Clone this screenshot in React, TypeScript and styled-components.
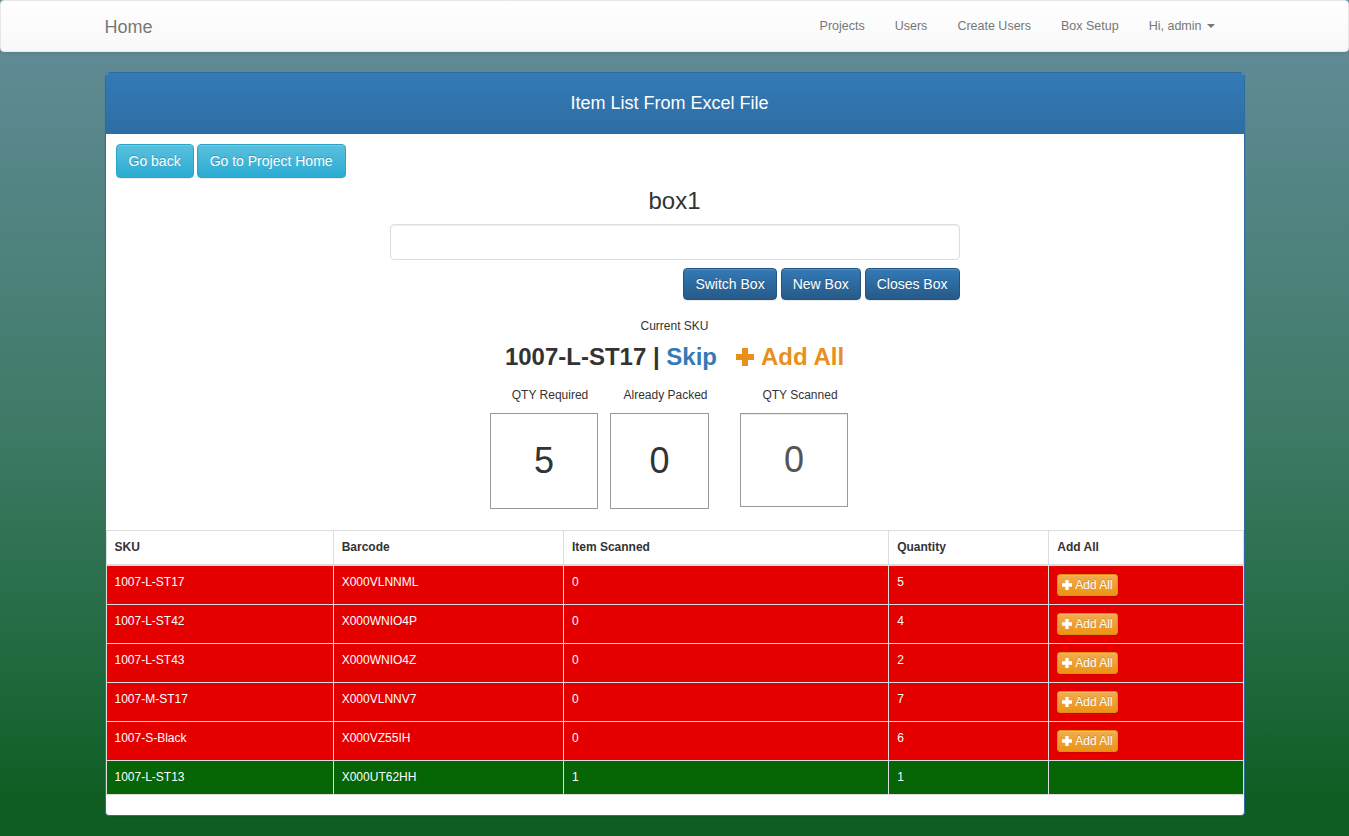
import React from "react";
import styled, { createGlobalStyle } from "styled-components";

const GlobalStyle = createGlobalStyle`
  html, body { margin: 0; padding: 0; }
  body {
    font-family: "Liberation Sans", Arial, sans-serif;
    font-size: 14px;
    line-height: 1.42857;
    color: #333;
    min-height: 836px;
    background: linear-gradient(to bottom, #6a909d 0px, #5f8a94 60px, #3e7a66 430px, #1c6638 700px, #0e5e22 800px, #0e5e22 836px);
  }
  * { box-sizing: border-box; }
`;

const Navbar = styled.nav`
  height: 52px;
  background: linear-gradient(to bottom, #ffffff 0%, #f8f8f8 100%);
  border: 1px solid #e7e7e7;
  border-radius: 4px;
  box-shadow: inset 0 1px 0 rgba(255,255,255,.15), 0 1px 5px rgba(0,0,0,.075);
  margin-bottom: 20px;
`;

const NavInner = styled.div`
  width: 1170px;
  margin: 0 auto;
  padding: 0 15px;
  height: 50px;
  display: flex;
  align-items: center;
  justify-content: space-between;
`;

const Brand = styled.a`
  font-size: 18px;
  line-height: 20px;
  color: #777;
  text-decoration: none;
  padding-top: 2px;
`;

const NavLinks = styled.ul`
  display: flex;
  list-style: none;
  margin: 0 15px 0 0;
  padding: 0;
`;

const NavLink = styled.li`
  padding: 15px 15px;
  font-size: 12.5px;
  line-height: 20px;
  color: #777;
  display: flex;
  align-items: center;
`;

const Caret = styled.span`
  display: inline-block;
  width: 0;
  height: 0;
  margin-left: 5px;
  border-top: 4px solid #777;
  border-left: 4px solid transparent;
  border-right: 4px solid transparent;
`;

const Panel = styled.section`
  width: 1140px;
  margin: 0 auto;
  background: #fff;
  border: 1px solid #2e6da4;
  border-radius: 4px;
  overflow: hidden;
  box-shadow: 0 1px 2px rgba(0,0,0,.05);
`;

const PanelHeading = styled.header`
  height: 61px;
  display: flex;
  align-items: center;
  justify-content: center;
  background: linear-gradient(to bottom, #337ab7 0%, #2e6da4 100%);
  color: #fff;
  font-size: 18px;
  padding: 1px 10px 0 0;
`;

const PanelBody = styled.div`
  padding: 10px 10px 21px;
  display: flex;
  flex-direction: column;
  align-items: center;
`;

const TopButtons = styled.div`
  align-self: flex-start;
  display: flex;
  gap: 3px;
`;

const Btn = styled.button<{ $variant: "info" | "primary" | "warning"; $small?: boolean }>`
  font-family: "Liberation Sans", Arial, sans-serif;
  color: #fff;
  border-radius: ${(p) => (p.$small ? "3px" : "4px")};
  font-size: ${(p) => (p.$small ? "12px" : "14px")};
  line-height: ${(p) => (p.$small ? "18px" : "20px")};
  padding: ${(p) => (p.$small ? "1px 5px" : "6px 12px")};
  height: ${(p) => (p.$small ? "22px" : "auto")};
  cursor: pointer;
  display: inline-flex;
  align-items: center;
  gap: 3px;
  text-shadow: 0 -1px 0 rgba(0,0,0,.2);
  box-shadow: inset 0 1px 0 rgba(255,255,255,.15), 0 1px 1px rgba(0,0,0,.075);
  ${(p) =>
    p.$variant === "info"
      ? `background: linear-gradient(to bottom, #5bc0de 0%, #2aabd2 100%); border: 1px solid #28a4c9;`
      : p.$variant === "primary"
      ? `background: linear-gradient(to bottom, #337ab7 0%, #265a88 100%); border: 1px solid #245580; height: 32px; padding: 5px 11px;`
      : `background: linear-gradient(to bottom, #f0ad4e 0%, #eb9316 100%); border: 1px solid #e38d13; padding: 1px 4px;`}
`;

const BoxTitle = styled.h3`
  font-size: 24px;
  font-weight: 500;
  line-height: 26px;
  margin: 10px 0 10px;
`;

const BoxInput = styled.input`
  width: 570px;
  height: 36px;
  border: 1px solid #ddd;
  border-radius: 4px;
  box-shadow: inset 0 1px 1px rgba(0,0,0,.075);
  outline: none;
`;

const BoxActions = styled.div`
  width: 570px;
  display: flex;
  justify-content: flex-end;
  gap: 4px;
  margin-top: 8px;
`;

const SmallLabel = styled.div`
  font-size: 12px;
  line-height: 17px;
`;

const CurrentLabel = styled(SmallLabel)`
  margin-top: 18px;
`;

const SkuLine = styled.div`
  font-size: 24px;
  font-weight: bold;
  line-height: 28px;
  margin-top: 8px;
  display: flex;
  align-items: center;
  white-space: pre;
`;

const SkipLink = styled.a`
  color: #337ab7;
  text-decoration: none;
`;

const AddAllLink = styled.a`
  color: #e8901b;
  text-decoration: none;
  margin-left: 19px;
  display: inline-flex;
  align-items: center;
  gap: 7px;
`;

const QtyRow = styled.div`
  display: flex;
  margin-top: 16px;
  padding-right: 11px;
  align-items: flex-start;
`;

const QtyGroup = styled.div<{ $gapRight: number }>`
  display: flex;
  flex-direction: column;
  align-items: center;
  margin-right: ${(p) => p.$gapRight}px;
`;

const QtyLabel = styled(SmallLabel)`
  padding-left: 12px;
  white-space: nowrap;
  margin-bottom: 9px;
`;

const QtyBox = styled.div<{ $w: number; $h: number; $muted?: boolean }>`
  width: ${(p) => p.$w}px;
  height: ${(p) => p.$h}px;
  border: 1px solid #999;
  display: flex;
  align-items: center;
  justify-content: center;
  font-size: 36px;
  color: ${(p) => (p.$muted ? "#555" : "#333")};
  ${(p) => (p.$muted ? "box-shadow: inset 0 1px 1px rgba(0,0,0,.075);" : "")}
`;

const Table = styled.table`
  width: 100%;
  border-collapse: collapse;
  margin-bottom: 20px;
  font-size: 12px;
  line-height: 17px;
`;

const Th = styled.th<{ $w: number }>`
  width: ${(p) => p.$w}px;
  text-align: left;
  padding: 8px;
  font-weight: bold;
  color: #333;
  border: 1px solid #ddd;
  border-bottom-width: 2px;
`;

const Tr = styled.tr<{ $done: boolean }>`
  background: ${(p) => (p.$done ? "#066506" : "#e50000")};
  color: #fff;
`;

const Td = styled.td`
  padding: 8px;
  vertical-align: top;
  border: 1px solid #ddd;
`;

const PlusIcon = ({ size, color }: { size: number; color: string }) => (
  <svg width={size} height={size} viewBox="0 0 12 12" aria-hidden="true">
    <path d="M4 0h4v4h4v4H8v4H4V8H0V4h4z" fill={color} />
  </svg>
);

const rows = [
  { sku: "1007-L-ST17", barcode: "X000VLNNML", scanned: 0, qty: 5 },
  { sku: "1007-L-ST42", barcode: "X000WNIO4P", scanned: 0, qty: 4 },
  { sku: "1007-L-ST43", barcode: "X000WNIO4Z", scanned: 0, qty: 2 },
  { sku: "1007-M-ST17", barcode: "X000VLNNV7", scanned: 0, qty: 7 },
  { sku: "1007-S-Black", barcode: "X000VZ55IH", scanned: 0, qty: 6 },
  { sku: "1007-L-ST13", barcode: "X000UT62HH", scanned: 1, qty: 1 },
];

export default function App() {
  return (
    <>
      <GlobalStyle />
      <Navbar>
        <NavInner>
          <Brand>Home</Brand>
          <NavLinks>
            <NavLink>Projects</NavLink>
            <NavLink>Users</NavLink>
            <NavLink>Create Users</NavLink>
            <NavLink>Box Setup</NavLink>
            <NavLink>
              Hi, admin <Caret />
            </NavLink>
          </NavLinks>
        </NavInner>
      </Navbar>
      <Panel>
        <PanelHeading>Item List From Excel File</PanelHeading>
        <PanelBody>
          <TopButtons>
            <Btn $variant="info">Go back</Btn>
            <Btn $variant="info">Go to Project Home</Btn>
          </TopButtons>
          <BoxTitle>box1</BoxTitle>
          <BoxInput type="text" />
          <BoxActions>
            <Btn $variant="primary">Switch Box</Btn>
            <Btn $variant="primary">New Box</Btn>
            <Btn $variant="primary">Closes Box</Btn>
          </BoxActions>
          <CurrentLabel>Current SKU</CurrentLabel>
          <SkuLine>
            1007-L-ST17 | <SkipLink>Skip</SkipLink>
            <AddAllLink>
              <PlusIcon size={18} color="#e8901b" />
              Add All
            </AddAllLink>
          </SkuLine>
          <QtyRow>
            <QtyGroup $gapRight={12}>
              <QtyLabel>QTY Required</QtyLabel>
              <QtyBox $w={108} $h={96}>5</QtyBox>
            </QtyGroup>
            <QtyGroup $gapRight={31}>
              <QtyLabel>Already Packed</QtyLabel>
              <QtyBox $w={99} $h={96}>0</QtyBox>
            </QtyGroup>
            <QtyGroup $gapRight={0}>
              <QtyLabel>QTY Scanned</QtyLabel>
              <QtyBox $w={108} $h={94} $muted>0</QtyBox>
            </QtyGroup>
          </QtyRow>
        </PanelBody>
        <Table>
          <thead>
            <tr>
              <Th $w={227}>SKU</Th>
              <Th $w={230}>Barcode</Th>
              <Th $w={325}>Item Scanned</Th>
              <Th $w={160}>Quantity</Th>
              <Th $w={194}>Add All</Th>
            </tr>
          </thead>
          <tbody>
            {rows.map((r) => {
              const done = r.scanned >= r.qty;
              return (
                <Tr key={r.sku} $done={done}>
                  <Td>{r.sku}</Td>
                  <Td>{r.barcode}</Td>
                  <Td>{r.scanned}</Td>
                  <Td>{r.qty}</Td>
                  <Td>
                    {!done && (
                      <Btn $variant="warning" $small>
                        <PlusIcon size={10} color="#fff" />
                        Add All
                      </Btn>
                    )}
                  </Td>
                </Tr>
              );
            })}
          </tbody>
        </Table>
      </Panel>
    </>
  );
}
